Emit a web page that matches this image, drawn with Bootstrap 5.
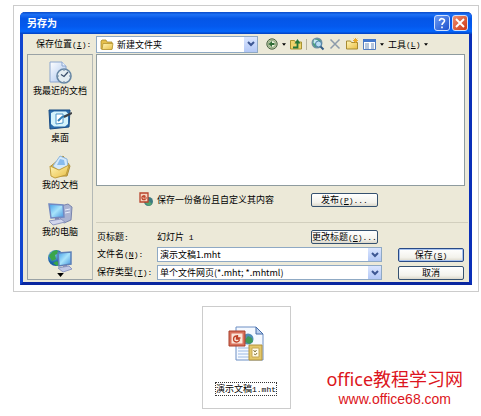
<!DOCTYPE html>
<html lang="zh-CN">
<head>
<meta charset="utf-8">
<meta name="viewport" content="width=device-width, initial-scale=1">
<title>另存为</title>
<link href="https://cdn.jsdelivr.net/npm/bootstrap@5.3.0/dist/css/bootstrap.min.css" rel="stylesheet">
<style>
body{background:#fff;color:#000;font-family:"Noto Sans CJK SC",sans-serif;font-size:9px;line-height:13px}
.page{padding:5px 2px 0 13px}
.frame{border:1px solid #ccc;padding:6px}
.en{font-family:"Liberation Mono",monospace;font-size:8px}
.dialog{background:#ece9d8;border:3px solid #0a3cc8;border-top:0;border-color:#1145cf #0a2fb8 #0a27a0 #1145cf;border-radius:5px 5px 0 0}
.titlebar{height:22px;gap:2px;margin:0 -3px;padding:0 4px 0 7px;border-radius:5px 5px 0 0;background:linear-gradient(#0a4bc8,#1c70f5 12%,#0556e6 30%,#0459ee 65%,#0566fa 88%,#0340c0)}
.titlebar h1{font-size:10px;line-height:20px;color:#fff;font-weight:700}
.cap{width:16px;height:16px;border:1px solid #cfe0ff;border-radius:3px;padding:0;background:linear-gradient(135deg,#6b9bf5,#1c50cc)}
.cap-close{background:linear-gradient(135deg,#f09070,#cc3513)}
.cap svg{display:block}
.toolbar{height:20px;padding-left:13px}
.toolbar label{width:60px}
.tool{border:0;background:none;padding:0;color:#000;font-size:9px;line-height:13px}
.tool svg{display:block}
.sep{width:1px;height:11px;background:#b5b29f}
.combo{display:grid;grid-template-columns:1fr 13px;background:#fff;border:1px solid #8fa9c4;height:15px;min-width:0}
.combo-tall{height:17px;width:162px}
.combo select,.combo input{grid-area:1/1/2/3;appearance:none;border:0;background:none;padding:0 14px 0 2px;font-size:9px;line-height:13px;color:#000;min-width:0;width:100%;height:100%;outline:0}
.combo-tall select{padding-left:20px}
.combo .folder{grid-area:1/1/2/2;margin:1px 0 0 3px;pointer-events:none}
.combo .drop{grid-area:1/2/2/3;background:linear-gradient(#dbe6ff,#b3c8f6);border:0;padding:0;pointer-events:none;display:flex;align-items:center;justify-content:center}
.work{padding:0 4px 2px 4px;gap:3px}
.places{width:66px;border:1px solid #9aa2a5;border-right-color:#b4b9b6;padding-top:5px}
.place{display:flex;flex-direction:column;align-items:center;border:0;background:none;padding:0;height:47px;color:#000;font-size:9px;line-height:12px}
.place svg{display:block}
.place:last-child{height:31px}
.files{height:132px;background:#fff;border:1px solid #8e9b9f}
.publish{height:36px;padding-top:6px}
.fields{display:grid;grid-template-columns:60px minmax(0,1fr) 71px 16px 66px;row-gap:3px;padding:0 1px}
.fields label{align-self:start}
.span2{grid-column:2/4}
.lower{border-top:1px solid #d2cfbe;padding-top:7px;margin-right:-3px;padding-right:3px}
.xp{height:14px;border:1px solid #35516f;border-radius:2px;background:linear-gradient(#fff,#f3f2ec 70%,#dcd8cb);padding:0;color:#000;font-size:9px;line-height:12px;width:67px;white-space:nowrap}
.xp-default{border-color:#294a86;box-shadow:inset 0 0 0 1px #a9c3ee}
.bottom{display:grid;grid-template-columns:1fr 89px 1fr;margin-top:14px}
.thumb{border:1px solid #ccc;height:103px;padding-top:18px}
.thumb .name{border:1px dotted #333;margin-top:19px;line-height:11px;white-space:nowrap}
.brand{color:#dc1420;padding:0 0 1px 20px}
.brand strong{font:400 18px/22px "Noto Sans","Noto Sans CJK SC",sans-serif;white-space:nowrap}
.brand a{font:14px/18px "Liberation Sans",sans-serif;color:#dc1420}
</style>
<script src="https://cdn.jsdelivr.net/npm/bootstrap@5.3.0/dist/js/bootstrap.bundle.min.js"></script>
</head>
<body>
<svg width="0" height="0" class="position-absolute" aria-hidden="true"><defs>
<linearGradient id="scr" x1="0" y1="0" x2="1" y2="1"><stop offset="0" stop-color="#3f9be8"/><stop offset=".5" stop-color="#a8e4fb"/><stop offset="1" stop-color="#3f8fdc"/></linearGradient>
<linearGradient id="fold" x1="0" y1="0" x2="1" y2="1"><stop offset="0" stop-color="#fff6b8"/><stop offset="1" stop-color="#e9bd43"/></linearGradient>
<linearGradient id="sheet" x1="0" y1="0" x2="1" y2="1"><stop offset="0" stop-color="#fff"/><stop offset="1" stop-color="#a6c3ee"/></linearGradient>
<radialGradient id="earth" cx=".35" cy=".3"><stop offset="0" stop-color="#7fd0e8"/><stop offset="1" stop-color="#1a5fa8"/></radialGradient>
<symbol id="chev" viewBox="0 0 8 6"><path d="M1 1l3 3 3-3" fill="none" stroke="#3d5793" stroke-width="2"/></symbol>
<symbol id="tri" viewBox="0 0 5 3"><path d="M0 0h5L2.500 3z" fill="#000"/></symbol>
</defs></svg>
<main class="page">
<section class="frame">
<form class="dialog" onsubmit="return false">
  <header class="titlebar d-flex align-items-center">
    <h1 class="m-0 me-auto">另存为</h1>
    <button type="button" class="cap" aria-label="帮助"><svg width="14" height="14" viewBox="0 0 14 14"><path d="M4.500 5C4.500 1.800 9.800 2 9.500 5C9.300 6.600 7 6.800 7 9M7 10.500v1.700" fill="none" stroke="#fff" stroke-width="1.600"/></svg></button>
    <button type="button" class="cap cap-close" aria-label="关闭"><svg width="14" height="14" viewBox="0 0 14 14"><path d="M3 3l8 8M11 3l-8 8" stroke="#fff" stroke-width="1.900"/></svg></button>
  </header>
  <div class="toolbar d-flex align-items-center">
    <label for="loc">保存位置<span class="en">(<u>I</u>):</span></label>
    <div class="combo combo-tall">
      <svg class="folder" width="14" height="13" viewBox="0 0 14 13"><path d="M1 11V3l1-1h4l1 2h5v7z" fill="#e6c04c" stroke="#a98a2c" stroke-width=".8"/><path d="M2 11.500L3 5.500h10l-1 6z" fill="url(#fold)" stroke="#b89631" stroke-width=".8"/></svg>
      <select id="loc"><option>新建文件夹</option></select>
      <span class="drop"><svg width="8" height="6"><use href="#chev"/></svg></span>
    </div>
    <button type="button" class="tool d-flex align-items-center ms-2" aria-label="后退"><svg width="12" height="12" viewBox="0 0 12 12"><circle cx="6" cy="6" r="5.200" fill="#b9c9a4" stroke="#4c6345"/><circle cx="6" cy="6" r="3.500" fill="#eef3df" stroke="#708b5d" stroke-width=".7"/><path d="M2.500 6L6 3v2h2.500v2H6v2z" fill="#2f6b35"/></svg><svg class="ms-1" width="4" height="3"><use href="#tri"/></svg></button>
    <button type="button" class="tool ms-1" aria-label="向上一级"><svg width="12" height="12" viewBox="0 0 12 12"><path d="M.5 11V2.500h4L5.500 4h6v7z" fill="#efd36c" stroke="#a89332"/><path d="M3 9.500h4.500V5" fill="none" stroke="#23763a" stroke-width="1.800"/><path d="M4.500 5.500L7.500 1l3 4.500z" fill="#23763a"/></svg></button>
    <span class="sep mx-1"></span>
    <button type="button" class="tool" aria-label="搜索"><svg width="14" height="14" viewBox="0 0 14 14"><circle cx="6" cy="6" r="4.800" fill="#4aa27e" stroke="#6f90a4" stroke-width="1.400"/><path d="M3 2.500l3.500.5 1 2-3 2-2-1z" fill="#c8e8f2"/><circle cx="7.500" cy="7" r="3" fill="#b9dcf3" stroke="#4a7fa6"/><path d="M9.500 9.500l3 3" stroke="#345b83" stroke-width="2"/></svg></button>
    <button type="button" class="tool ms-1" aria-label="删除"><svg width="12" height="12" viewBox="0 0 12 12"><path d="M1.500 1.500l9 9M10.500 1.500l-9 9" stroke="#8d9bab" stroke-width="1.500"/></svg></button>
    <button type="button" class="tool ms-1" aria-label="新建文件夹"><svg width="14" height="12" viewBox="0 0 14 12"><path d="M1.500 11V3h4l1 1.500h6V11z" fill="url(#fold)" stroke="#a78a31"/><path d="M10.500 0v5M8 2.500h5M8.700.7l3.600 3.600M12.300.7L8.700 4.300" stroke="#eaa51d" stroke-width=".9"/></svg></button>
    <button type="button" class="tool d-flex align-items-center ms-1" aria-label="视图"><svg width="13" height="11" viewBox="0 0 13 11"><path d="M.5.5h12v10H.5z" fill="#fff" stroke="#527dc0"/><path d="M0 0h13v3H0z" fill="#4378cc"/><path d="M2 5h4M8 5h3M2 7h4M8 7h3M2 9h4M8 9h3" stroke="#6b8cb9"/></svg><svg class="ms-1" width="4" height="3"><use href="#tri"/></svg></button>
    <button type="button" class="tool d-flex align-items-center ms-1">工具<span class="en">(<u>L</u>)</span><svg class="ms-1" width="4" height="3"><use href="#tri"/></svg></button>
  </div>
  <div class="work d-flex">
    <nav class="places d-flex flex-column" aria-label="位置">
      <button type="button" class="place"><svg width="24" height="25" viewBox="0 0 24 25"><path d="M2 2h12l4 4v16H2z" fill="url(#sheet)" stroke="#8ca6ce"/><path d="M14 2v4h4" fill="#e8f2ff" stroke="#8ca6ce"/><circle cx="16" cy="16" r="7" fill="#e4edf2" stroke="#6686a4" stroke-width="1.600"/><path d="M20 12l-4 4.500-3-2" fill="none" stroke="#394e6b" stroke-width="1.300"/><path d="M16 10v1M16 21v1M10 16h1M21 16h1" stroke="#68809c"/></svg>我最近的文档</button>
      <button type="button" class="place"><svg width="24" height="25" viewBox="0 0 24 25"><path d="M1 3h21l-1 17-19 2z" fill="#2b6dad" stroke="#194c85"/><path d="M3 6l3-1.500h12l2 2V17l-3 2.500H6L3 17z" fill="#d5f3fc"/><path d="M8 7h7v9l-7 1z" fill="#fff" stroke="#4a93c8"/><path d="M10 14l4-4 6-2" fill="none" stroke="#3281b8" stroke-width="2"/><path d="M16 10l8-4" stroke="#3f4246" stroke-width="2"/></svg>桌面</button>
      <button type="button" class="place"><svg width="24" height="25" viewBox="0 0 24 25"><path d="M3 12L15 2l7 10-3 10H4z" fill="#e2ba4a" stroke="#ac8c37"/><path d="M5 12l7-10 7 3 1 8-7 6z" fill="#d4e9fb" stroke="#8db6dd"/><path d="M9 11l3-6 4 1 1 5z" fill="#88bbed"/><path d="M2 12l9 4 10-5-3 10-11 3-4-2z" fill="url(#fold)" stroke="#bf9d3f"/></svg>我的文档</button>
      <button type="button" class="place"><svg width="26" height="25" viewBox="0 0 26 25"><path d="M14 5l7-2 4 3-1 13-7 3-4-3z" fill="#aab3d2" stroke="#7984ad"/><path d="M18 9l5-1M18 12l5-1" stroke="#e9eefc"/><path d="M2 3l14 1 1 12-13 1z" fill="url(#scr)" stroke="#7289c2" stroke-width="1.500"/><path d="M8 17l4-1v4H8z" fill="#7c86b2"/><path d="M2 20l12-2 4 3-12 3z" fill="#d2d6ed" stroke="#8f98c2"/></svg>我的电脑</button>
      <button type="button" class="place" aria-label="网上邻居"><svg width="26" height="25" viewBox="0 0 26 25"><circle cx="9" cy="10" r="8" fill="url(#earth)"/><path d="M2 8q3-6 8-6l2 3-4 2 1 4-4 2zM6 15l4-2 3 3-3 2z" fill="#3aa54a"/><path d="M11 5l13-1v12l-12 2z" fill="url(#scr)" stroke="#5c80b8" stroke-width="1.500"/><path d="M16 17h4v3h-4z" fill="#7c86b2"/><path d="M11 20l11-2 3 3-9 3z" fill="#c0c8e4" stroke="#8f98c2"/></svg><svg width="7" height="4"><use href="#tri"/></svg></button>
    </nav>
    <div class="flex-fill">
      <div class="files" role="listbox" aria-label="文件"></div>
      <div class="publish"><div class="fields align-items-center">
        <svg class="ms-auto me-1" width="14" height="15" viewBox="0 0 14 15"><circle cx="9.500" cy="9.500" r="4.500" fill="#3d7a80"/><path d="M6 11l4-2 3 3-3 2z" fill="#54a46d"/><path d="M1 1h8v9H1z" fill="#f4d5c2" stroke="#b8432b" stroke-width="1.300"/><path d="M6.500 4.500a2 2 0 1 0 0 2.500M5 3v3h3" fill="none" stroke="#bc3e24" stroke-width="1.200"/></svg>
        <span>保存一份备份且自定义其内容</span>
        <button type="button" class="xp">发布<span class="en">(<u>P</u>)...</span></button>
      </div></div>
      <div class="lower"><div class="fields align-items-center">
        <span>页标题<span class="en">:</span></span><span>幻灯片<span class="en"> 1</span></span>
        <button type="button" class="xp">更改标题<span class="en">(<u>C</u>)...</span></button><i></i><i></i>
        <label for="fn">文件名<span class="en">(<u>N</u>):</span></label>
        <div class="combo span2"><input id="fn" type="text" value="演示文稿1.mht"><button type="button" class="drop" aria-label="文件名列表"><svg width="8" height="6"><use href="#chev"/></svg></button></div><i></i>
        <button type="submit" class="xp xp-default w-100">保存<span class="en">(<u>S</u>)</span></button>
        <label for="ft">保存类型<span class="en">(<u>T</u>):</span></label>
        <div class="combo span2"><select id="ft"><option>单个文件网页(*.mht; *.mhtml)</option></select><span class="drop"><svg width="8" height="6"><use href="#chev"/></svg></span></div><i></i>
        <button type="button" class="xp w-100">取消</button>
      </div></div>
    </div>
  </div>
</form>
</section>
<section class="bottom">
  <div></div>
  <div class="thumb d-flex flex-column align-items-center">
    <svg width="38" height="38" viewBox="0 0 38 38"><path d="M9 2h20l7 7v26H9z" fill="#f5f9ff" stroke="#6d8fc4"/><path d="M29 2v7h7z" fill="#bcd0ef" stroke="#456ca8"/><path d="M11 23h11M11 26h11M11 29h11M11 32h11" stroke="#9cb9e4"/><circle cx="21" cy="14" r="5.500" fill="#4e8eb8"/><path d="M17 16l4-5 4 2 1 4-4 2z" fill="#3f9a5a"/><path d="M2 6h16v15H2z" fill="#d9705a" stroke="#a8402c"/><path d="M4.500 8.500h11v10h-11z" fill="#fbe6da"/><path d="M12.500 14.500a3 3 0 1 1-3-3.500v3h3M10.500 10v3h3" fill="none" stroke="#bf4329" stroke-width="1.300"/><path d="M22 20h13v15H22z" fill="#e3c769" stroke="#b3923c"/><path d="M25 23h7v9h-7z" fill="#fffbe8" stroke="#c5a654"/><path d="M26.500 25l1.500 2 1.500-2M27 29q2 2 3-1" fill="none" stroke="#82733d"/></svg>
    <span class="name">演示文稿<span class="en">1.mht</span></span>
  </div>
  <div class="brand d-flex flex-column align-items-center justify-content-end">
    <strong>office教程学习网</strong>
    <a class="text-decoration-none" href="#">www.office68.com</a>
  </div>
</section>
</main>
</body>
</html>
